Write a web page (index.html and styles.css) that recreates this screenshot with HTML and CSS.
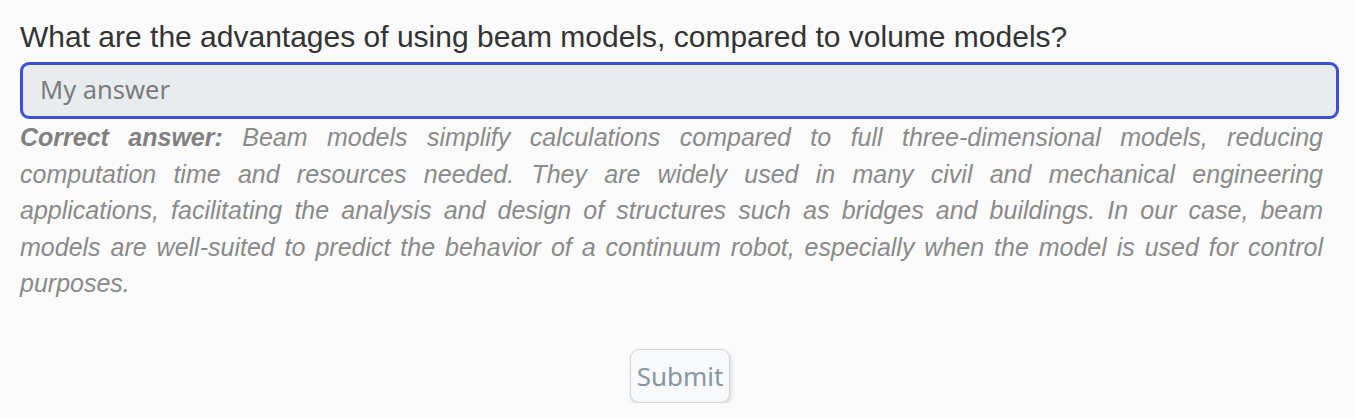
FILE: index.html
```html
<!DOCTYPE html>
<html>
<head>
<meta charset="utf-8">
<link rel="stylesheet" href="styles.css">
</head>
<body>
<div class="page">
  <h2 class="question">What are the advantages of using beam models, compared to volume models?</h2>
  <input class="answer-input" type="text" placeholder="My answer">
  <p class="correct"><b>Correct answer:</b> Beam models simplify calculations compared to full three-dimensional models, reducing computation time and resources needed. They are widely used in many civil and mechanical engineering applications, facilitating the analysis and design of structures such as bridges and buildings. In our case, beam models are well-suited to predict the behavior of a continuum robot, especially when the model is used for control purposes.</p>
  <div class="actions">
    <button class="submit" type="button">Submit</button>
  </div>
</div>
</body>
</html>
```

FILE: styles.css
```css
html, body {
  margin: 0;
  padding: 0;
  background: #fbfbfb;
}
.page {
  padding: 19px 16px 0 20px;
  font-family: "Liberation Sans", Arial, sans-serif;
}
.question {
  margin: 0 0 7px 0;
  font-weight: normal;
  font-size: 30px;
  line-height: 36px;
  color: #333333;
}
.answer-input {
  display: block;
  box-sizing: border-box;
  width: 100%;
  height: 57px;
  margin: 0;
  padding: 0 17px 3px 17px;
  border: 3px solid #3b4fd9;
  border-radius: 9px;
  background: #e9ecef;
  font-family: "Noto Sans", "Open Sans", sans-serif;
  font-size: 25.5px;
  color: #333;
  outline: none;
}
.answer-input::placeholder {
  color: #7b7b7b;
}
.correct {
  margin: 0 16px 0 0;
  font-size: 25px;
  line-height: 36.5px;
  font-style: italic;
  text-align: justify;
  color: #8a8a8a;
}
.correct b {
  font-weight: bold;
  color: #808080;
}
.actions {
  display: flex;
  justify-content: center;
  margin-top: 47px;
  padding-left: 1px;
}
.submit {
  box-sizing: border-box;
  width: 100px;
  height: 54px;
  padding: 0;
  border: 1px solid #d3d5d8;
  border-radius: 9px;
  background: #f8f9fb;
  box-shadow: 1px 2px 4px rgba(0,0,0,0.15);
  font-family: "Noto Sans", "Open Sans", sans-serif;
  font-size: 26px;
  color: #8996a4;
}
```
